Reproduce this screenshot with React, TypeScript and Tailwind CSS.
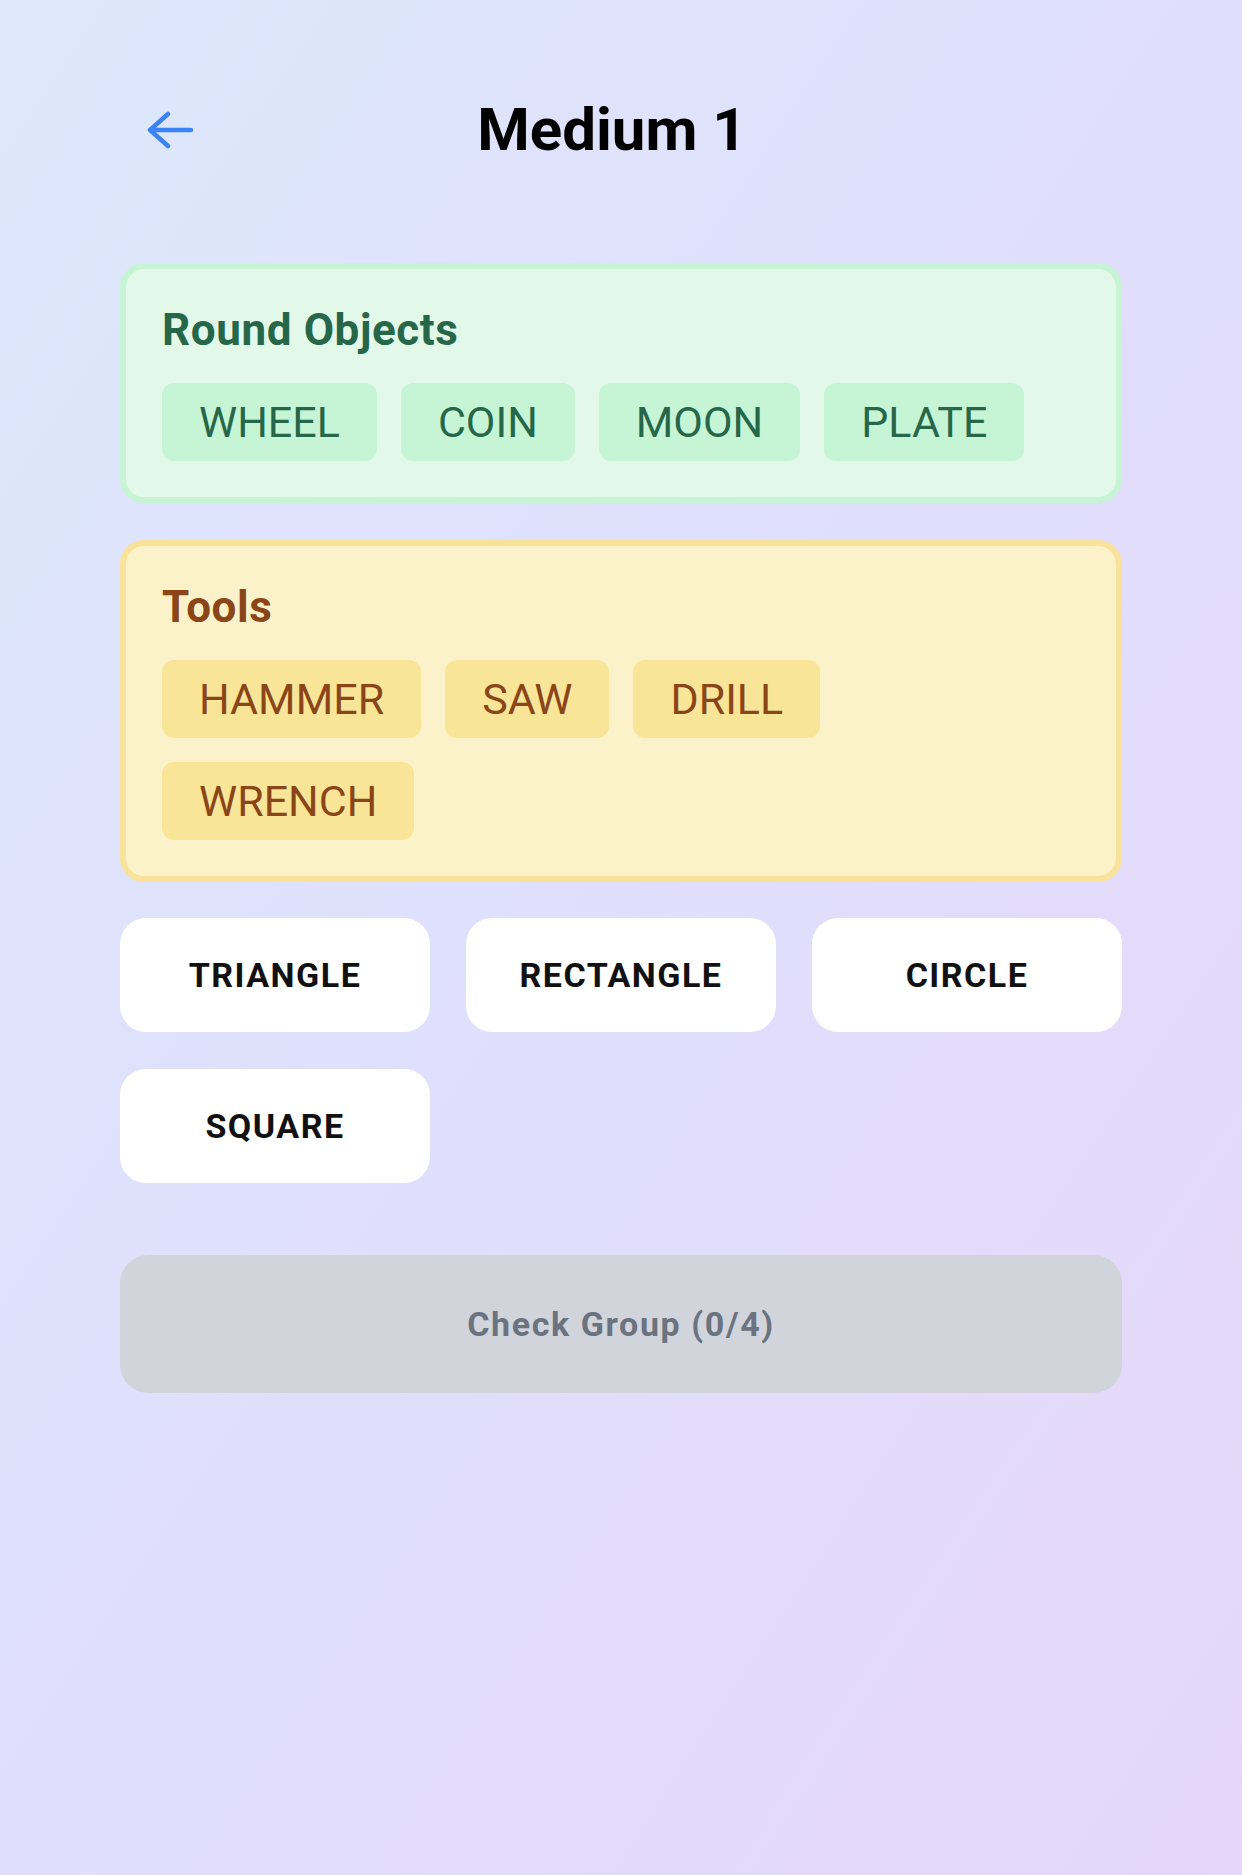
import React from "react";

type Group = {
  title: string;
  words: string[];
  card: string;
  chip: string;
  text: string;
};

const groups: Group[] = [
  {
    title: "Round Objects",
    words: ["WHEEL", "COIN", "MOON", "PLATE"],
    card: "bg-[#e2f9ea] border-[#c6f4d4]",
    chip: "bg-[#c6f5d5]",
    text: "text-[#276749]",
  },
  {
    title: "Tools",
    words: ["HAMMER", "SAW", "DRILL", "WRENCH"],
    card: "bg-[#fcf2c9] border-[#f9e39a]",
    chip: "bg-[#f8e598]",
    text: "text-[#8a4518]",
  },
];

const remaining = ["TRIANGLE", "RECTANGLE", "CIRCLE", "SQUARE"];

const BackArrow = () => (
  <svg width="50" height="40" viewBox="0 0 50 40" fill="none">
    <path
      d="M22 4 L4 20 L22 36 M4 20 H45"
      stroke="#3b82f6"
      strokeWidth="4.5"
      strokeLinecap="round"
      strokeLinejoin="round"
    />
  </svg>
);

export default function App() {
  return (
    <div className="min-h-[1875px] w-full bg-gradient-to-br from-[#dce8fc] via-[#e0dffb] to-[#e6d6f9] font-['Roboto',sans-serif]">
      <div className="px-[120px] pt-[90px]">
        {/* header */}
        <div className="flex h-[80px] items-center">
          <div className="w-[100px] pl-[26px]">
            <BackArrow />
          </div>
          <h1 className="flex-1 text-center text-[60px] font-bold leading-none text-black">
            Medium 1
          </h1>
          <div className="w-[118px]" />
        </div>

        {/* solved groups */}
        <div className="mt-[93px] flex flex-col gap-[37px]">
          {groups.map((g) => (
            <div
              key={g.title}
              className={`rounded-[24px] border-[6px] p-[36px] ${g.card}`}
            >
              <h2 className={`mb-[28px] text-[44px] font-bold leading-[50px] tracking-[0.6px] ${g.text}`}>
                {g.title}
              </h2>
              <div className="flex flex-wrap gap-[24px]">
                {g.words.map((w) => (
                  <div
                    key={w}
                    className={`flex h-[78px] items-center rounded-[12px] px-[37px] text-[43px] ${g.chip} ${g.text}`}
                  >
                    {w}
                  </div>
                ))}
              </div>
            </div>
          ))}
        </div>

        {/* remaining words */}
        <div className="mt-[36px] grid grid-cols-3 gap-x-[36px] gap-y-[37px]">
          {remaining.map((w) => (
            <button
              key={w}
              className="flex h-[114px] items-center justify-center rounded-[26px] bg-white text-[34px] font-bold tracking-[1.5px] text-[#111]"
            >
              {w}
            </button>
          ))}
        </div>

        <button className="mt-[72px] flex h-[138px] w-full items-center justify-center rounded-[28px] bg-[#d1d5db] text-[34px] font-bold tracking-[1.6px] text-[#6b7280]">
          Check Group (0/4)
        </button>
      </div>
    </div>
  );
}
